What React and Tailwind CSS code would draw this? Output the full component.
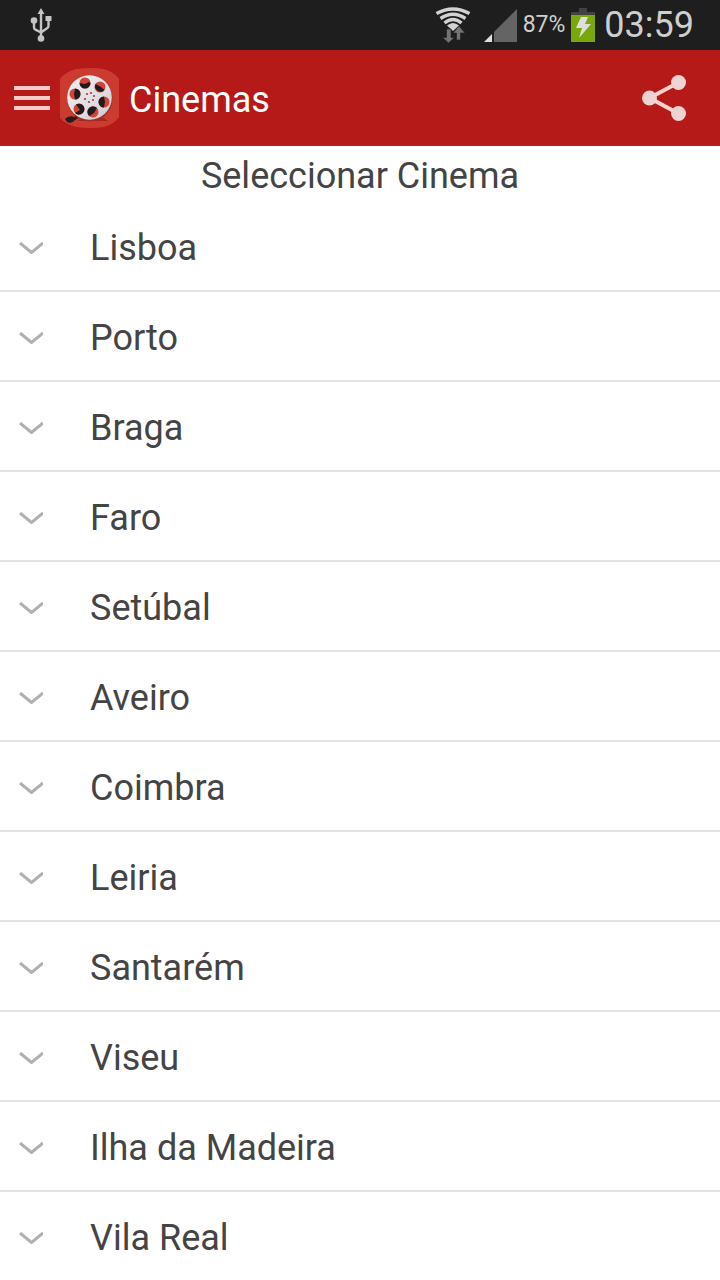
const cities = [
  'Lisboa', 'Porto', 'Braga', 'Faro', 'Setúbal', 'Aveiro',
  'Coimbra', 'Leiria', 'Santarém', 'Viseu', 'Ilha da Madeira', 'Vila Real',
];

function UsbIcon() {
  return (
    <svg className="h-9 w-6" viewBox="0 0 24 36" fill="none" stroke="#c4c4c4" strokeWidth="2.400" aria-hidden="true">
      <path d="M12 6v26M5 14v6.500q0 1.500 1.500 2.200L12 25.500M19.500 12v7q0 1.500-1.500 2.200L12 25.500" />
      <path d="M12 1l3.500 6h-7z" fill="#c4c4c4" stroke="none" />
      <circle cx="5" cy="13.500" r="3.300" fill="#c4c4c4" stroke="none" />
      <path d="M16.500 9h6v5h-6z" fill="#c4c4c4" stroke="none" />
      <circle cx="12" cy="31.500" r="3.300" fill="#c4c4c4" stroke="none" />
    </svg>
  );
}

function WifiIcon() {
  return (
    <svg className="h-9 w-9" viewBox="0 0 36 36" fill="none" stroke="#d2d2d2" strokeWidth="3.400" aria-hidden="true">
      <path d="M1.500 6.500Q18-2.500 34.500 6.500" />
      <path d="M5.500 11.500Q18 3 30.500 11.500" />
      <path d="M9.500 16Q18 9 26.500 16" />
      <path d="M12 18.500Q18 13.500 24 18.500L18 24z" fill="#d2d2d2" stroke="none" />
      <path d="M11.500 22h4.500v8.500h3.500L13.500 36l-6-5.500h4z" fill="#737373" stroke="#1e1e1e" strokeWidth="0.600" />
      <path d="M21.500 33h4v-7H30l-6-7-6 7h3.500z" fill="#737373" stroke="#1e1e1e" strokeWidth="0.600" />
    </svg>
  );
}

function SignalIcon() {
  return (
    <svg className="h-9 w-9" viewBox="0 0 36 36" aria-hidden="true">
      <path d="M11 25L34 2v33H11z" fill="#646464" />
      <path d="M1 35l8-8v8z" fill="#dedede" />
    </svg>
  );
}

function BatteryIcon() {
  return (
    <svg className="h-9 w-6" viewBox="0 0 24 36" aria-hidden="true">
      <path d="M8 1h8v4h8v4H0V5h8z" fill="#424242" />
      <path d="M0 8h24v27H0z" fill="#78a80a" />
      <path d="M10 10h7l-3 7h6L8 31l3-10H5z" fill="#dedede" />
    </svg>
  );
}

const holes = [[25, 15], [40, 19], [44, 34], [33, 44], [19, 41], [15, 26]];
const dots = [[27, 26], [31, 25], [34, 28], [33, 32], [29, 34], [25, 31]];

function ReelLogo() {
  return (
    <svg className="size-15" viewBox="0 0 60 60" aria-hidden="true">
      <defs>
        <linearGradient id="reel" x1="0" y1="0" x2="1" y2="1">
          <stop offset="0" stopColor="#f0f0f3" />
          <stop offset="0.600" stopColor="#dedee2" />
          <stop offset="1" stopColor="#c6c6cc" />
        </linearGradient>
      </defs>
      <path d="M16 1Q30-1 44 1Q54 4 59 11V49Q55 56 44 59Q30 61 16 59Q5 56 0 50V11Q5 4 16 1z" fill="#cb3b30" />
      <path d="M18 53h30l-4-3H22z" fill="#a52720" />
      <path d="M5 51q4-4 9-2l5-3 1 3-5 3q-3 4-8 2z" fill="#241c1d" />
      <circle cx="30" cy="31" r="22.500" fill="#a52c27" />
      <circle cx="29.500" cy="29.500" r="22.300" fill="url(#reel)" />
      {holes.map(([x, y], i) => (
        <g key={i} transform={`translate(${x} ${y})`}>
          <circle r="5.500" fill="#d14437" />
          <path
            d={[
              'M-5.500 0A5.500 5.500 0 0 0 5.500 0L4 -1L0 1z',
              'M-4.500-3A5.500 5.500 0 0 0 4.500 3L1 0z',
              'M0-5.500A5.500 5.500 0 0 0 0 5.500L1 0z',
              'M-4 4A5.500 5.500 0 0 1 4-4L1 1z',
              'M-3-4.500A5.500 5.500 0 1 1-4 4L1 1z',
              'M0-5.500A5.500 5.500 0 0 1 0 5.500L-1 0z',
            ][i]}
            fill="#201a1c"
          />
        </g>
      ))}
      {dots.map(([x, y], i) => <circle key={i} cx={x} cy={y} r="1.100" fill="#b23642" />)}
    </svg>
  );
}

function ShareIcon() {
  return (
    <svg className="h-12 w-11" viewBox="0 0 44 48" aria-hidden="true">
      <path d="M36.500 8.500L7.500 24L36.500 39.500" fill="none" stroke="#fad2d0" strokeWidth="4" />
      <g fill="#efd3d2">
        <circle cx="36.500" cy="8.500" r="7.500" />
        <circle cx="7.500" cy="24" r="7.500" />
        <circle cx="36.500" cy="39.500" r="7.500" />
      </g>
    </svg>
  );
}

export default function App() {
  return (
    <div className="min-h-screen w-full bg-white font-['Roboto',sans-serif] text-[#444444]">
      <div className="flex h-[50px] items-center justify-between bg-[#1e1e1e] pr-[26px] pl-[29px] text-[#cfcfcf]">
        <UsbIcon />
        <div className="flex items-center">
          <div className="flex items-center gap-3">
            <WifiIcon />
            <SignalIcon />
          </div>
          <span className="ml-1 text-[23px]">87%</span>
          <div className="ml-[6px]"><BatteryIcon /></div>
          <span className="ml-[9px] text-4xl">03:59</span>
        </div>
      </div>

      <header className="flex h-24 items-center bg-[#b51918] pr-[34px] pl-[14px] text-white">
        <button type="button" aria-label="Menu" className="flex w-9 flex-col gap-1.5">
          <span className="h-1 w-full bg-[#f8cdcb]" />
          <span className="h-1 w-full bg-[#f8cdcb]" />
          <span className="h-1 w-full bg-[#f8cdcb]" />
        </button>
        <div className="ml-[10px]"><ReelLogo /></div>
        <h1 className="ml-[9px] flex-1 pt-1 text-4xl">Cinemas</h1>
        <button type="button" aria-label="Share"><ShareIcon /></button>
      </header>

      <main>
        <h2 className="pt-[9px] text-center text-4xl leading-[42px]">Seleccionar Cinema</h2>
        <ul className="mt-[5px]">
          {cities.map((city) => (
            <li key={city} className="border-b-2 border-[#e3e3e3] last:border-b-0">
              <button type="button" className="flex h-[88px] w-full items-center pt-1 pl-[19px] text-left text-4xl">
                <svg className="h-3 w-6" viewBox="0 0 24 12" fill="none" stroke="#b0b0b0" strokeWidth="3" aria-hidden="true">
                  <path d="M1 1L12.500 10.500L24 1" />
                </svg>
                <span className="ml-[47px]">{city}</span>
              </button>
            </li>
          ))}
        </ul>
      </main>
    </div>
  );
}
